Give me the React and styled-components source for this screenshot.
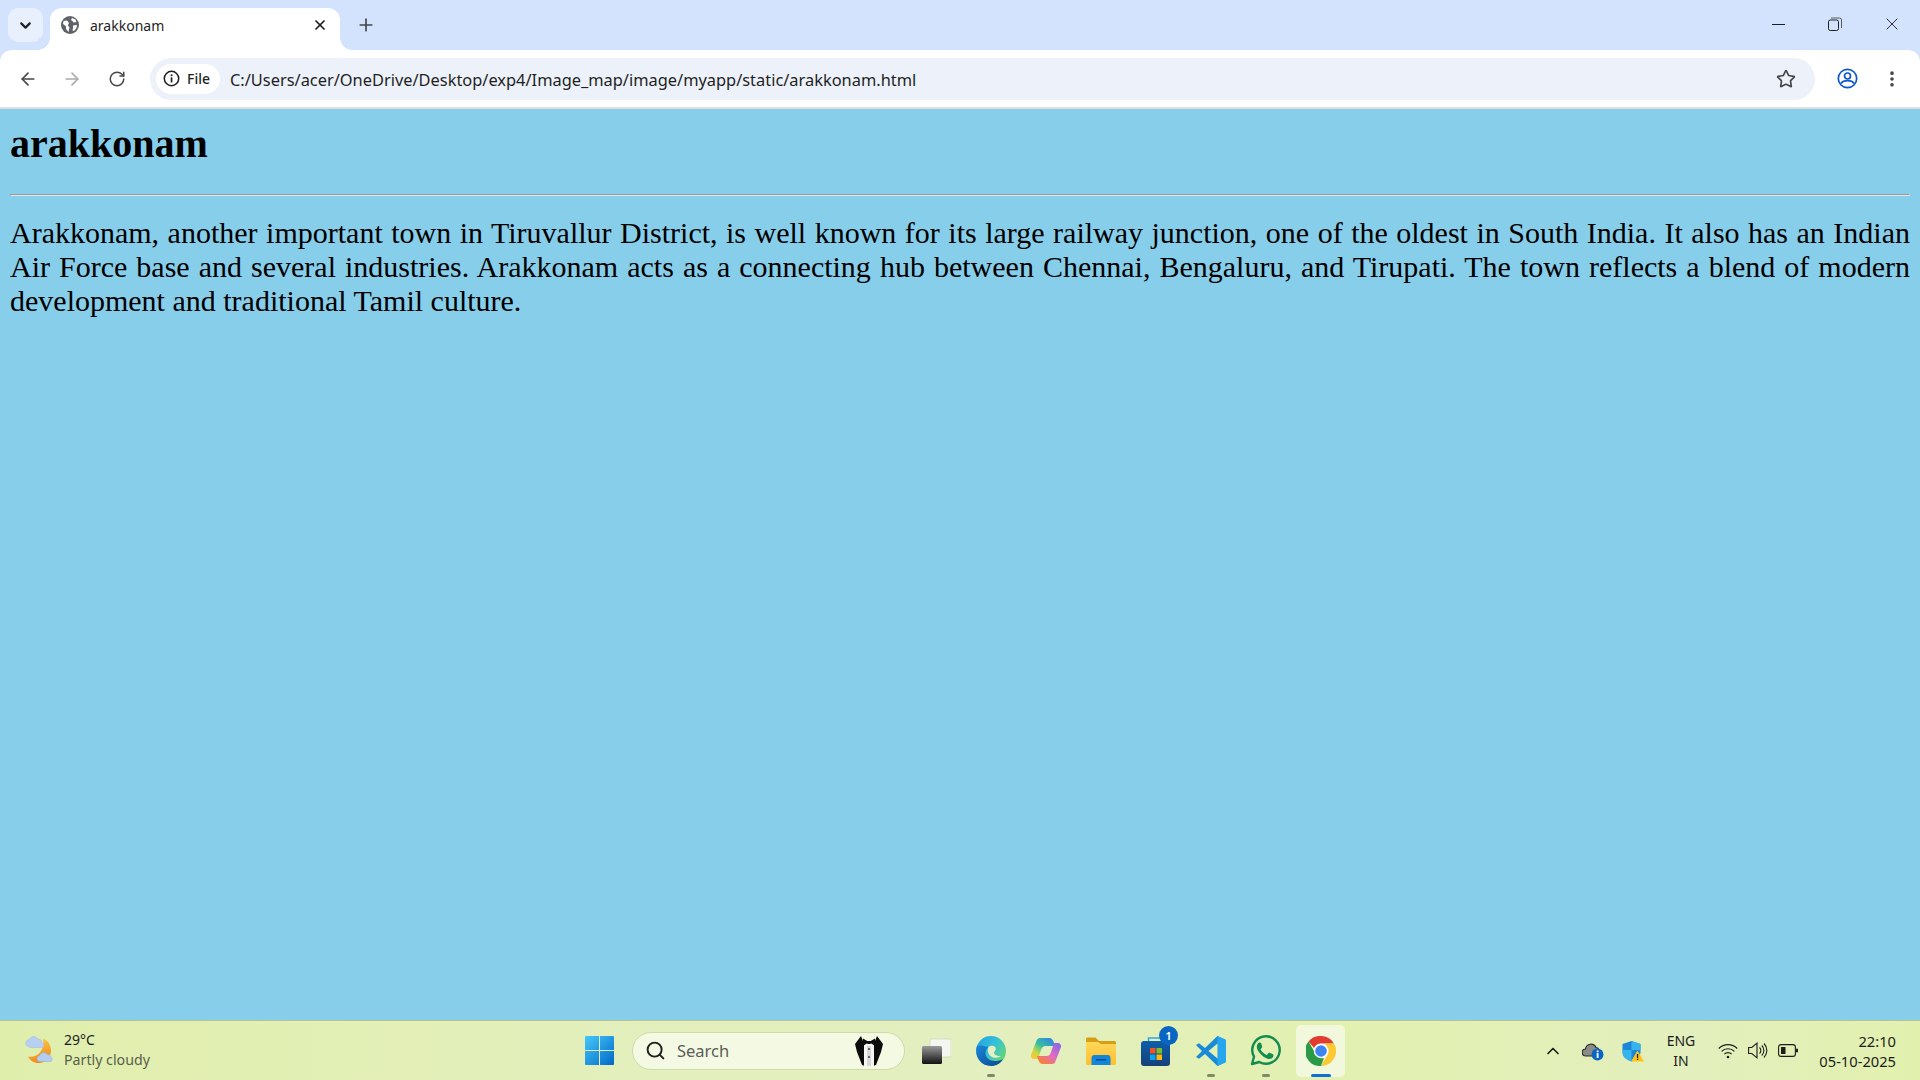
import React from "react";
import styled, { createGlobalStyle } from "styled-components";
import { ArrowLeft, ArrowRight, RotateCw, Plus, X, ChevronDown, ChevronUp, Star, EllipsisVertical, Search as SearchGlyph } from "lucide-react";

const GlobalStyle = createGlobalStyle`
  html, body { margin: 0; padding: 0; height: 100%; overflow: hidden; }
  #root { height: 100%; }
`;

const Screen = styled.div`
  display: flex;
  flex-direction: column;
  height: 100vh;
  background: #87ceeb;
  font-family: "Noto Sans", "Open Sans", sans-serif;
`;

const TabStrip = styled.div`
  display: flex;
  align-items: flex-end;
  height: 50px;
  padding-left: 8px;
  background: #d3e3fd;
  flex-shrink: 0;
`;

const TabListButton = styled.div`
  display: flex;
  align-items: center;
  justify-content: center;
  width: 35px;
  height: 34px;
  margin-bottom: 8px;
  border-radius: 10px;
  background: #e9f0fd;
  color: #1f1f1f;
`;

const Tab = styled.div`
  position: relative;
  display: flex;
  align-items: center;
  width: 290px;
  height: 42px;
  margin-left: 7px;
  padding: 0 12px 8px 11px;
  box-sizing: border-box;
  background: #fff;
  border-radius: 12px 12px 0 0;
  font-size: 14px;
  color: #1f1f1f;

  &::before,
  &::after {
    content: "";
    position: absolute;
    bottom: 0;
    width: 12px;
    height: 12px;
    background: radial-gradient(circle at 0 0, #d3e3fd 11.5px, #fff 12px);
  }
  &::before { left: -12px; }
  &::after {
    right: -12px;
    background: radial-gradient(circle at 100% 0, #d3e3fd 11.5px, #fff 12px);
  }
`;

const TabTitle = styled.span`
  flex: 1;
  margin-left: 11px;
`;

const TabClose = styled.span`
  display: flex;
  color: #1f1f1f;
`;

const NewTab = styled.div`
  display: flex;
  align-items: center;
  justify-content: center;
  width: 28px;
  height: 28px;
  margin: 0 0 11px 12px;
  color: #444746;
`;

const WindowControls = styled.div`
  display: flex;
  margin-left: auto;
  height: 50px;
`;

const WindowButton = styled.div`
  display: flex;
  align-items: center;
  justify-content: center;
  width: 56.5px;
  height: 48px;
  color: #1f1f1f;
`;

const MinimizeBar = styled.span`
  display: block;
  width: 13px;
  height: 1px;
  background: #1f1f1f;
`;

const ToolbarShell = styled.div`
  background: #d3e3fd;
  flex-shrink: 0;
`;

const Toolbar = styled.div`
  display: flex;
  align-items: center;
  height: 57px;
  padding-left: 6px;
  background: #fff;
  border-radius: 12px 12px 0 0;
  border-bottom: 2px solid #dfdfdf;
`;

const NavButton = styled.div`
  display: flex;
  align-items: center;
  justify-content: center;
  width: ${(p) => p.$w || 44}px;
  height: 40px;
  color: ${(p) => (p.$muted ? "#a9abac" : "#474747")};
`;

const Omnibox = styled.div`
  display: flex;
  align-items: center;
  width: 1665px;
  height: 42px;
  margin-left: 10px;
  padding-left: 6px;
  box-sizing: border-box;
  background: #ecf1fa;
  border-radius: 21px;
`;

const SiteChip = styled.div`
  display: flex;
  align-items: center;
  gap: 7px;
  width: 64px;
  height: 30px;
  padding-left: 7px;
  box-sizing: border-box;
  background: #fff;
  border-radius: 15px;
  font-size: 14px;
  font-weight: 500;
  color: #1f1f1f;
`;

const Url = styled.span`
  margin: 1px 0 0 10px;
  font-size: 16.4px;
  color: #1f1f1f;
  white-space: nowrap;
`;

const OmniEnd = styled.div`
  display: flex;
  margin-left: auto;
  margin-right: 19px;
  color: #474747;
`;

const ToolEnd = styled.div`
  display: flex;
  align-items: center;
  margin-left: 10px;
`;

const Article = styled.main`
  flex: 1;
  padding: 0 10px;
  color: #000;
  font-family: "Liberation Serif", "Times New Roman", serif;
  overflow: hidden;
`;

const Heading = styled.h1`
  margin: 12px 0 27px;
  font-size: 40px;
  line-height: 46px;
  font-weight: 700;
`;

const Rule = styled.hr`
  margin: 0 0 20px;
  border-style: solid;
  border-width: 1px;
  border-color: #9a9a9a #e6e6e6 #e6e6e6 #9a9a9a;
`;

const Paragraph = styled.p`
  margin: 0;
  font-size: 30px;
  line-height: 34px;
  text-align: justify;
`;

const Taskbar = styled.footer`
  display: flex;
  align-items: center;
  height: 59px;
  flex-shrink: 0;
  border-top: 1px solid #b5c39a;
  background: linear-gradient(90deg, #e0eeac 0%, #e2efb2 12%, #e3efbb 30%, #e4efc0 50%, #e2f0b0 70%, #e3efbd 88%, #e2f0ae 100%);
`;

const Weather = styled.div`
  display: flex;
  align-items: center;
  width: 572px;
  padding-left: 24px;
  box-sizing: border-box;
  flex-shrink: 0;
`;

const WeatherText = styled.div`
  margin: -2px 0 0 8px;
  font-size: 14px;
  line-height: 20px;
  color: #1c1c1c;
`;

const WeatherNote = styled.div`
  color: #5a5e4c;
  font-size: 14.2px;
`;

const TaskCenter = styled.div`
  display: flex;
  align-items: center;
`;

const TaskItem = styled.div`
  position: relative;
  display: flex;
  align-items: center;
  justify-content: center;
  width: 55px;
  height: 52px;

  ${(p) =>
    p.$active &&
    `&::before {
      content: "";
      position: absolute;
      inset: 0 3px;
      border-radius: 5px;
      background: rgba(255, 255, 255, 0.55);
    }
    & > svg { position: relative; }`}
`;

const RunDot = styled.span`
  position: absolute;
  bottom: 0;
  left: 50%;
  width: ${(p) => (p.$active ? 20 : 8)}px;
  height: 3px;
  margin-left: ${(p) => (p.$active ? -10 : -4)}px;
  border-radius: 2px;
  background: ${(p) => (p.$active ? "#0f6fd6" : "#7f8a68")};
`;

const Badge = styled.span`
  position: absolute;
  top: 1px;
  right: 5px;
  width: 19px;
  height: 19px;
  border-radius: 50%;
  background: #0b66c3;
  color: #fff;
  font-size: 11.5px;
  font-weight: 600;
  line-height: 19px;
  text-align: center;
`;

const SearchBox = styled.div`
  display: flex;
  align-items: center;
  width: 273px;
  height: 38px;
  margin: 0 3px 0 5px;
  padding-left: 12px;
  box-sizing: border-box;
  background: #f4f9e4;
  border: 1px solid #cfdba6;
  border-radius: 19px;
  color: #1f1f1f;
`;

const SearchLabel = styled.span`
  margin-left: 11px;
  font-size: 16.5px;
  color: #5b5d57;
`;

const SearchArt = styled.span`
  display: flex;
  margin-left: auto;
  margin-right: 20px;
`;

const Tray = styled.div`
  display: flex;
  align-items: center;
  margin-left: auto;
  width: 385px;
  padding-right: 24px;
  box-sizing: border-box;
  color: #1c1c1c;
`;

const TrayCell = styled.div`
  display: flex;
  align-items: center;
  justify-content: center;
  width: ${(p) => p.$w}px;
  margin-left: ${(p) => p.$gap || 0}px;
  flex-shrink: 0;
`;

const Lang = styled.div`
  width: 56px;
  font-size: 14px;
  line-height: 20px;
  text-align: center;
`;

const Clock = styled.div`
  margin-left: auto;
  font-size: 14.7px;
  line-height: 20px;
  text-align: right;
`;

const GlobeIcon = () => (
  <svg width="18" height="18" viewBox="0 0 18 18">
    <circle cx="9" cy="9" r="9" fill="#5f6368" />
    <path d="M2.5 5 6 4.5 8 7 6.8 9.5 8.5 11.5 7.5 16 5 13 4.8 10 2 8ZM11 2l3.5 1.5 1 2.5-3 .5-1-1.5-1.5-1ZM12 9.5l4-.5-.5 3-2.5 3-1.5-.5.5-2.5Z" fill="#fff" />
  </svg>
);

const RestoreIcon = () => (
  <svg width="14" height="14" viewBox="0 0 14 14" fill="none" stroke="#1f1f1f" strokeWidth="1">
    <rect x="0.5" y="3" width="10" height="10.5" rx="1.8" />
    <path d="M3 1h8.5a2 2 0 0 1 2 2v8" stroke="#5a5a5a" />
  </svg>
);

const InfoIcon = () => (
  <svg width="17" height="17" viewBox="0 0 17 17" fill="none">
    <circle cx="8.5" cy="8.5" r="7.2" stroke="#1f1f1f" strokeWidth="1.5" />
    <rect x="7.7" y="7.4" width="1.7" height="5" fill="#1f1f1f" />
    <rect x="7.7" y="4.4" width="1.7" height="1.8" fill="#1f1f1f" />
  </svg>
);

const ProfileIcon = () => (
  <svg width="21" height="21" viewBox="0 0 21 21" fill="none" stroke="#0b57d0" strokeWidth="1.7">
    <circle cx="10.5" cy="10.5" r="9.2" />
    <circle cx="10.5" cy="8" r="3" />
    <path d="M3.8 15.5c1.5-2 4-2.8 6.7-2.8s5.2.8 6.7 2.8" />
  </svg>
);

const WeatherIcon = () => (
  <svg width="32" height="32" viewBox="0 0 32 32">
    <defs>
      <linearGradient id="moon" x1="0" y1="0" x2="0.3" y2="1">
        <stop offset="0" stopColor="#fcd34f" />
        <stop offset="1" stopColor="#f08a1d" />
      </linearGradient>
    </defs>
    <path d="M19 3.500a13 13 0 0 1 8 12c0 7-6 12.500-12 12.500-5.500 0-9-2.500-11-6.500 8 1.500 17-4 15-18Z" fill="url(#moon)" />
    <path d="M4 11.500a3.500 3.500 0 0 1 1-6.800 5 5 0 0 1 9-.700 4 4 0 0 1 4 3.800 2.400 2.400 0 0 1-1 4.700H6Z" fill="#b7cff0" stroke="#9cb8e4" strokeWidth="0.5" />
    <path d="M15 26.500a3 3 0 0 1 .500-5.800 4.500 4.500 0 0 1 8-1.200 4 4 0 0 1 4 3.400 2.200 2.200 0 0 1-.500 3.600Z" fill="#b3ccf0" stroke="#8fb0e2" strokeWidth="0.5" />
  </svg>
);

const WindowsIcon = () => (
  <svg width="29" height="29" viewBox="0 0 29 29">
    <defs>
      <linearGradient id="win" x1="0" y1="0" x2="1" y2="1">
        <stop offset="0" stopColor="#47c8fb" />
        <stop offset="1" stopColor="#0069c8" />
      </linearGradient>
    </defs>
    <path d="M1 0h13v14H0V1a1 1 0 0 1 1-1ZM15 0h13a1 1 0 0 1 1 1v13H15ZM0 15h14v14H1a1 1 0 0 1-1-1ZM15 15h14v13a1 1 0 0 1-1 1H15Z" fill="url(#win)" />
  </svg>
);

const TuxedoIcon = () => (
  <svg width="30" height="32" viewBox="0 0 30 32">
    <path d="M7 1 1 9l2 8 5 13 3 1V11Z" fill="#0c0c0c" />
    <path d="M23 1l6 8-2 8-5 13-3 1V11Z" fill="#0c0c0c" />
    <path d="M10 9h10v22h-10Z" fill="#f5f5f5" />
    <path d="M15 7 9 3.500v7.500ZM15 7l6-3.500v7.500Z" fill="#0c0c0c" />
    <rect x="13" y="6" width="4" height="3" rx="1" fill="#0c0c0c" />
    <path d="M13 11h4v20h-4Z" fill="#d8d8d8" />
    <circle cx="15" cy="14" r="0.900" fill="#333" />
    <circle cx="15" cy="22" r="0.900" fill="#333" />
  </svg>
);

const TaskViewIcon = () => (
  <svg width="30" height="26" viewBox="0 0 30 26">
    <defs>
      <linearGradient id="tv" x1="0" y1="0" x2="0" y2="1">
        <stop offset="0" stopColor="#9a9a9a" />
        <stop offset="1" stopColor="#111" />
      </linearGradient>
    </defs>
    <rect x="9" y="1" width="21" height="18" rx="1.500" fill="#f4f6f2" stroke="#c9cdc0" strokeWidth="0.6" />
    <rect x="1" y="8" width="20" height="18" rx="1.500" fill="url(#tv)" />
  </svg>
);

const EdgeIcon = () => (
  <svg width="30" height="30" viewBox="0 0 30 30">
    <defs>
      <linearGradient id="edgeA" x1="0" y1="0" x2="1" y2="0.7">
        <stop offset="0" stopColor="#1f9ee0" />
        <stop offset="0.55" stopColor="#35c1d8" />
        <stop offset="1" stopColor="#6ad66e" />
      </linearGradient>
      <linearGradient id="edgeB" x1="0" y1="0" x2="0.8" y2="1">
        <stop offset="0" stopColor="#1b86d8" />
        <stop offset="1" stopColor="#0b4f98" />
      </linearGradient>
    </defs>
    <circle cx="15" cy="15" r="15" fill="url(#edgeA)" />
    <path d="M1 10c-3 9 3 20 14 20 5 0 9.500-2.500 12-7-2.500 1.500-5 2-8 2-5.500 0-9.500-3.500-9.500-8 0-2.500 1-4.500 3-6C7 9.500 3 9 1 10Z" fill="url(#edgeB)" />
    <path d="M12.500 11c2-2 6-1.500 7 .5 1 2-.5 3.500-1.500 5 0 2 3 4 7 3.500-3 2-7 2.500-10 .5-3-2.500-4-6.500-2.500-9.500Z" fill="#e6f0c2" />
  </svg>
);

const CopilotIcon = () => (
  <svg width="30" height="30" viewBox="0 0 30 30">
    <defs>
      <linearGradient id="coA" x1="0.9" y1="0" x2="0.1" y2="0.9">
        <stop offset="0" stopColor="#2f7fe6" />
        <stop offset="0.5" stopColor="#38bfa0" />
        <stop offset="0.8" stopColor="#c8d83f" />
        <stop offset="1" stopColor="#f6c838" />
      </linearGradient>
      <linearGradient id="coB" x1="0.9" y1="0.1" x2="0.2" y2="0.9">
        <stop offset="0" stopColor="#8f66e6" />
        <stop offset="0.5" stopColor="#e06bc4" />
        <stop offset="1" stopColor="#f5803f" />
      </linearGradient>
    </defs>
    <path d="M9 2h9c3 0 4 2 5 5l1 3h-9c-3 0-4 1-5 4l-3 9H3c-2 0-3.500-2-3-4l5-13c1-3 2-4 4-4Z" fill="url(#coA)" />
    <path d="M21 28h-9c-3 0-4-2-5-5l-1-3h9c3 0 4-1 5-4l3-9h4c2 0 3.500 2 3 4l-5 13c-1 3-2 4-4 4Z" fill="url(#coB)" />
  </svg>
);

const FolderIcon = () => (
  <svg width="30" height="28" viewBox="0 0 30 28">
    <defs>
      <linearGradient id="folder" x1="0" y1="0" x2="0" y2="1">
        <stop offset="0" stopColor="#ffd75a" />
        <stop offset="1" stopColor="#fdbf30" />
      </linearGradient>
    </defs>
    <path d="M0 2a1.500 1.500 0 0 1 1.500-1.500h8L13 4h15.500A1.500 1.500 0 0 1 30 5.500V9H0Z" fill="#d69e12" />
    <path d="M0 5h12l3 2h15v19.500A1.500 1.500 0 0 1 28.500 28h-27A1.500 1.500 0 0 1 0 26.500Z" fill="url(#folder)" />
    <path d="M5.500 28v-7a3 3 0 0 1 3-3h13a3 3 0 0 1 3 3v7Z" fill="#1486d8" />
    <rect x="10" y="22" width="10" height="1.500" fill="#0c4f98" />
  </svg>
);

const StoreIcon = () => (
  <svg width="30" height="30" viewBox="0 0 30 30">
    <defs>
      <linearGradient id="store" x1="0" y1="0" x2="0" y2="1">
        <stop offset="0" stopColor="#0c60ac" />
        <stop offset="1" stopColor="#173f78" />
      </linearGradient>
    </defs>
    <path d="M7.500 6V2h14v4" fill="none" stroke="#2ea6e8" strokeWidth="1.500" />
    <rect x="0" y="5" width="29" height="25" rx="3" fill="url(#store)" />
    <rect x="9" y="12" width="5.500" height="5.500" fill="#f0512a" />
    <rect x="15.500" y="12" width="5.500" height="5.500" fill="#7fba2b" />
    <rect x="9" y="18.500" width="5.500" height="5.500" fill="#08a4ee" />
    <rect x="15.500" y="18.500" width="5.500" height="5.500" fill="#fcb80d" />
  </svg>
);

const VsCodeIcon = () => (
  <svg width="30" height="30" viewBox="0 0 30 30">
    <path d="M21.500 0 30 4v22l-8.500 4L9 18l-6 4.800L0 21l6-6-6-6 3-1.800L9 12Z" fill="#1a8ad6" />
    <path d="M21.500 0 30 4v22l-8.500 4Z" fill="#25a6ef" />
    <path d="M21.500 7.500 12.500 15l9 7.500Z" fill="#e2f0b5" />
  </svg>
);

const WhatsAppIcon = () => (
  <svg width="31" height="31" viewBox="0 0 31 31">
    <path d="M2 29l2-7.300A13.700 13.700 0 1 1 9.300 27Z" fill="none" stroke="#128c4f" strokeWidth="2.400" strokeLinejoin="round" />
    <path d="M11.300 8.400c-.5-1-1-1-1.500-1-1 0-3 1.300-3 4 0 3 2.200 5.800 2.500 6.200 3 4 6.200 5.600 8.700 6.300 2.500.6 4.800-1 5.300-2.500.2-.8.200-1.500.1-1.700-.5-.5-3.200-1.800-3.700-2-.5-.1-.8-.1-1.200.4l-1.300 1.600c-.3.300-.5.300-1 .1-1.800-.8-4.200-2.600-5.500-5-.2-.5 0-.7.300-1l1-1.300c.2-.3.200-.6.100-.9Z" fill="#128c4f" />
  </svg>
);

const ChromeIcon = () => (
  <svg width="30" height="30" viewBox="0 0 30 30">
    <path d="M15 0a15 15 0 0 1 13 7.500H15a7.500 7.500 0 0 0-6.900 4.600L2.500 5.500A15 15 0 0 1 15 0Z" fill="#e33b2e" />
    <path d="M28 7.500A15 15 0 0 1 15 30l6.500-11.200a7.500 7.500 0 0 0-.5-8.300 7.500 7.500 0 0 0-3-3Z" fill="#fcc934" />
    <path d="M15 30A15 15 0 0 1 2.500 5.500L9 16.800a7.500 7.500 0 0 0 9 5.300Z" fill="#2b9a47" />
    <circle cx="15" cy="15" r="7.200" fill="#fff" />
    <circle cx="15" cy="15" r="5.800" fill="#3f84ee" />
  </svg>
);

const OneDriveIcon = () => (
  <svg width="22" height="20" viewBox="0 0 22 20">
    <path d="M4 15a3.500 3.500 0 0 1-.5-7A5.500 5.500 0 0 1 14 6.500a3.500 3.500 0 0 1 3 2.500v6Z" fill="#8a8c86" stroke="#2b2b2b" strokeWidth="1.200" />
    <circle cx="15.500" cy="13.500" r="6" fill="#0b66c3" />
    <rect x="14.700" y="12" width="1.800" height="5" fill="#fff" />
    <rect x="14.700" y="9.500" width="1.800" height="1.700" fill="#fff" />
  </svg>
);

const ShieldIcon = () => (
  <svg width="22" height="22" viewBox="0 0 22 22">
    <path d="M9.500 1 18.500 4v8c0 5-4 7.800-9 9.500C4.500 19.800 .5 17 .5 12V4Z" fill="#1c86d8" />
    <path d="M9.500 1 18.500 4v6H9.500ZM9.500 10v11.500C4.500 19.800 .5 17 .5 12v-2Z" fill="#36b4ee" />
    <path d="M15.500 10.500 22 21.500H9Z" fill="#fcc419" />
    <rect x="14.900" y="14" width="1.300" height="4" fill="#222" />
    <rect x="14.900" y="18.700" width="1.300" height="1.300" fill="#222" />
  </svg>
);

const WifiIcon = () => (
  <svg width="20" height="16" viewBox="0 0 20 16" fill="none" stroke="#1c1c1c" strokeWidth="1.200">
    <path d="M.8 5.500a13 13 0 0 1 18.400 0" />
    <path d="M3.600 8.400a9 9 0 0 1 12.800 0" />
    <path d="M6.400 11.200a5 5 0 0 1 7.200 0" />
    <circle cx="10" cy="14" r="1.300" fill="#1c1c1c" stroke="none" />
  </svg>
);

const VolumeIcon = () => (
  <svg width="20" height="17" viewBox="0 0 20 17" fill="none" stroke="#1c1c1c" strokeWidth="1.100">
    <path d="M.6 5.500h3.200L9 1.200v14.600l-5.200-4.300H.6Z" />
    <path d="M11.500 5.500a4 4 0 0 1 0 6" />
    <path d="M13.800 3.500a7 7 0 0 1 0 10" />
    <path d="M16 1.500a10 10 0 0 1 0 14" />
  </svg>
);

const BatteryIcon = () => (
  <svg width="20" height="13" viewBox="0 0 20 13">
    <rect x="0.600" y="0.600" width="16.800" height="11.800" rx="2.500" fill="none" stroke="#1c1c1c" strokeWidth="1.100" />
    <rect x="3" y="3" width="4.500" height="7" fill="#1c1c1c" />
    <rect x="18" y="4.500" width="2" height="4" rx="1" fill="#1c1c1c" />
  </svg>
);

const App = () => {
  return (
    <Screen>
      <GlobalStyle />
      <TabStrip>
        <TabListButton>
          <ChevronDown size={17} strokeWidth={3} />
        </TabListButton>
        <Tab>
          <GlobeIcon />
          <TabTitle>arakkonam</TabTitle>
          <TabClose>
            <X size={16} strokeWidth={2.6} />
          </TabClose>
        </Tab>
        <NewTab>
          <Plus size={20} strokeWidth={2} />
        </NewTab>
        <WindowControls>
          <WindowButton>
            <MinimizeBar />
          </WindowButton>
          <WindowButton>
            <RestoreIcon />
          </WindowButton>
          <WindowButton>
            <X size={20} strokeWidth={1.1} />
          </WindowButton>
        </WindowControls>
      </TabStrip>
      <ToolbarShell>
        <Toolbar>
          <NavButton>
            <ArrowLeft size={20} strokeWidth={2} />
          </NavButton>
          <NavButton $muted>
            <ArrowRight size={20} strokeWidth={2} />
          </NavButton>
          <NavButton $w={46}>
            <RotateCw size={18} strokeWidth={2} />
          </NavButton>
          <Omnibox>
            <SiteChip>
              <InfoIcon />
              File
            </SiteChip>
            <Url>C:/Users/acer/OneDrive/Desktop/exp4/Image_map/image/myapp/static/arakkonam.html</Url>
            <OmniEnd>
              <Star size={20} strokeWidth={2} />
            </OmniEnd>
          </Omnibox>
          <ToolEnd>
            <NavButton $w={44}>
              <ProfileIcon />
            </NavButton>
            <NavButton $w={46}>
              <EllipsisVertical size={20} strokeWidth={2.4} />
            </NavButton>
          </ToolEnd>
        </Toolbar>
      </ToolbarShell>
      <Article>
        <Heading>arakkonam</Heading>
        <Rule />
        <Paragraph>
          Arakkonam, another important town in Tiruvallur District, is well known for its large railway junction, one of
          the oldest in South India. It also has an Indian Air Force base and several industries. Arakkonam acts as a
          connecting hub between Chennai, Bengaluru, and Tirupati. The town reflects a blend of modern development and
          traditional Tamil culture.
        </Paragraph>
      </Article>
      <Taskbar>
        <Weather>
          <WeatherIcon />
          <WeatherText>
            <div>29°C</div>
            <WeatherNote>Partly cloudy</WeatherNote>
          </WeatherText>
        </Weather>
        <TaskCenter>
          <TaskItem>
            <WindowsIcon />
          </TaskItem>
          <SearchBox>
            <SearchGlyph size={21} strokeWidth={2.2} />
            <SearchLabel>Search</SearchLabel>
            <SearchArt>
              <TuxedoIcon />
            </SearchArt>
          </SearchBox>
          <TaskItem>
            <TaskViewIcon />
          </TaskItem>
          <TaskItem>
            <EdgeIcon />
            <RunDot />
          </TaskItem>
          <TaskItem>
            <CopilotIcon />
          </TaskItem>
          <TaskItem>
            <FolderIcon />
          </TaskItem>
          <TaskItem>
            <StoreIcon />
            <Badge>1</Badge>
          </TaskItem>
          <TaskItem>
            <VsCodeIcon />
            <RunDot />
          </TaskItem>
          <TaskItem>
            <WhatsAppIcon />
            <RunDot />
          </TaskItem>
          <TaskItem $active>
            <ChromeIcon />
            <RunDot $active />
          </TaskItem>
        </TaskCenter>
        <Tray>
          <TrayCell $w={36}>
            <ChevronUp size={20} strokeWidth={2} />
          </TrayCell>
          <TrayCell $w={40} $gap={2}>
            <OneDriveIcon />
          </TrayCell>
          <TrayCell $w={40}>
            <ShieldIcon />
          </TrayCell>
          <TrayCell $w={56}>
            <Lang>
              ENG
              <br />
              IN
            </Lang>
          </TrayCell>
          <TrayCell $w={30} $gap={4}>
            <WifiIcon />
          </TrayCell>
          <TrayCell $w={30}>
            <VolumeIcon />
          </TrayCell>
          <TrayCell $w={30}>
            <BatteryIcon />
          </TrayCell>
          <Clock>
            22:10
            <br />
            05-10-2025
          </Clock>
        </Tray>
      </Taskbar>
    </Screen>
  );
};

export default App;
